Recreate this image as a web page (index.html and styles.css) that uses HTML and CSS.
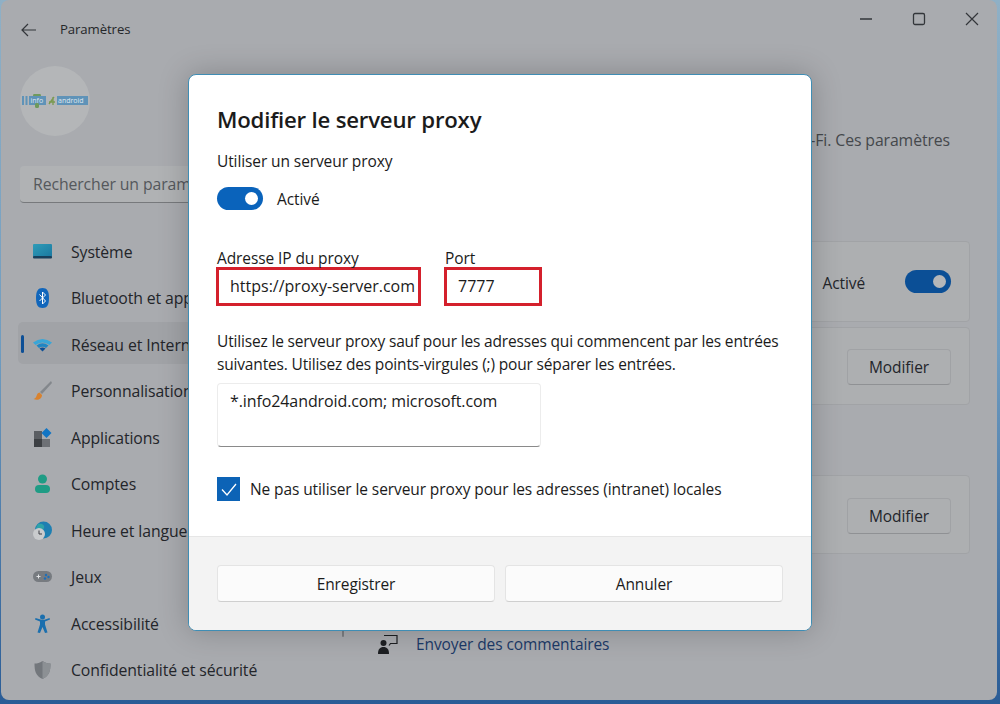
FILE: index.html
```html
<!DOCTYPE html>
<html lang="fr">
<head>
    <meta charset="UTF-8">
    <meta name="viewport" content="width=device-width, initial-scale=1.0">
    <title>Paramètres</title>
    <link rel="stylesheet" href="styles.css">
</head>
<body>
    <div class="window">
        <header class="titlebar">
            <div class="titlebar-left">
                <svg class="back" width="16" height="14" viewBox="0 0 16 14"><path d="M7 1 1 7l6 6M1 7h14" fill="none" stroke="#33363a" stroke-width="1.2"/></svg>
                <span class="app-name">Paramètres</span>
            </div>
            <div class="controls">
                <svg width="14" height="14" viewBox="0 0 14 14"><path d="M1 7h12" stroke="#33363a" stroke-width="1.3"/></svg>
                <svg width="14" height="14" viewBox="0 0 14 14"><rect x="1.5" y="1.5" width="11" height="11" rx="1.5" fill="none" stroke="#33363a" stroke-width="1.3"/></svg>
                <svg width="14" height="14" viewBox="0 0 14 14"><path d="M1 1l12 12M13 1 1 13" stroke="#33363a" stroke-width="1.2"/></svg>
            </div>
        </header>

        <div class="columns">
            <aside class="sidebar">
                <div class="avatar">
                    <svg width="66" height="14" viewBox="0 0 66 14">
                        <rect x="0" y="2" width="2" height="9" fill="#5f93b8"/>
                        <rect x="3.5" y="2" width="2" height="9" fill="#5f93b8"/>
                        <rect x="7" y="2" width="17" height="9" fill="#5f93b8"/>
                        <path d="M11 2a4 3 0 0 1 8 0z" fill="#6f9a5c"/>
                        <rect x="13" y="9" width="4" height="5" rx="1.5" fill="#6f9a5c"/>
                        <text x="8.5" y="9.4" class="logo-text">info</text>
                        <path d="M27 10l5-7M27 8h6M31 3v8" stroke="#7a9a50" stroke-width="1.3" fill="none"/>
                        <rect x="35" y="2" width="31" height="9" fill="#5f93b8"/>
                        <text x="36" y="9.2" class="logo-text">android</text>
                    </svg>
                </div>
                <div class="search">Rechercher un paramètre</div>
                <nav class="nav">
                    <a class="nav-item">
                        <svg class="nav-icon" width="20" height="20" viewBox="0 0 20 20">
                            <defs><linearGradient id="screen" x1="0" y1="0" x2="1" y2="1"><stop offset="0" stop-color="#2f9cb8"/><stop offset="1" stop-color="#1a78a0"/></linearGradient></defs>
                            <rect x="0" y="2" width="19" height="13" rx="1" fill="url(#screen)"/>
                            <rect x="0" y="14" width="19" height="2.5" rx="1" fill="#173f5c"/>
                        </svg>
                        Système
                    </a>
                    <a class="nav-item">
                        <svg class="nav-icon" width="20" height="20" viewBox="0 0 20 20">
                            <path d="M9.500 0C14 0 16 3 16 10s-2 10-6.500 10S3 17 3 10 5 0 9.500 0z" fill="#1166bb"/>
                            <path d="M6.500 6.500l6 6.500-3 3V4l3 3-6 6" fill="none" stroke="#fff" stroke-width="1"/>
                        </svg>
                        Bluetooth et appareils
                    </a>
                    <a class="nav-item active">
                        <svg class="nav-icon" width="20" height="20" viewBox="0 0 20 20">
                            <path d="M0 7.500Q9.500 .5 19 7.500l-2.500 2.500Q9.500 5 2.500 10z" fill="#39a6d8"/>
                            <path d="M3.500 10.500Q9.500 6 15.500 10.500l-2.500 2.500q-3.500-2.500-7 0z" fill="#1f86c4"/>
                            <path d="M6.500 13.500q3-2 6 0l-3 3z" fill="#0d4f96"/>
                        </svg>
                        Réseau et Internet
                    </a>
                    <a class="nav-item">
                        <svg class="nav-icon" width="20" height="20" viewBox="0 0 20 20">
                            <path d="M18 0 7 11l2 2L19 2z" fill="#83878c"/>
                            <path d="M6.500 11.500C3 12 4.500 17 .5 18c4 2 8.500 0 8.500-4z" fill="#d9822e"/>
                        </svg>
                        Personnalisation
                    </a>
                    <a class="nav-item">
                        <svg class="nav-icon" width="20" height="20" viewBox="0 0 20 20">
                            <rect x="1" y="3" width="8" height="8" fill="#5b5e63"/>
                            <rect x="1" y="11" width="8" height="8" fill="#3d4044"/>
                            <rect x="9" y="11" width="8" height="8" fill="#6d7075"/>
                            <path d="M13.500 0l5 5-5 5-5-5z" fill="#1275c4"/>
                        </svg>
                        Applications
                    </a>
                    <a class="nav-item">
                        <svg class="nav-icon" width="20" height="20" viewBox="0 0 20 20">
                            <circle cx="9.500" cy="5" r="4.500" fill="#1f9c85"/>
                            <rect x="2" y="11" width="15" height="8" rx="4" fill="#1f9c85"/>
                        </svg>
                        Comptes
                    </a>
                    <a class="nav-item">
                        <svg class="nav-icon" width="20" height="20" viewBox="0 0 20 20">
                            <circle cx="10.500" cy="9" r="8.500" fill="#1d7fb2"/>
                            <path d="M5 3c4-1 7 1 6 4S5 8 3 7z" fill="#2ea3a8"/>
                            <circle cx="6" cy="13" r="6" fill="#c9cbcd"/>
                            <path d="M6 9.500V13h3" fill="none" stroke="#3c3f44" stroke-width="1"/>
                        </svg>
                        Heure et langue
                    </a>
                    <a class="nav-item">
                        <svg class="nav-icon" width="20" height="20" viewBox="0 0 20 20">
                            <rect x="0" y="4" width="19" height="11" rx="5.500" fill="#777b80"/>
                            <path d="M3.500 9.500h4M5.500 7.500v4" stroke="#e2e4e6" stroke-width="1"/>
                            <circle cx="13" cy="8" r="1.200" fill="#1f6fb8"/>
                            <circle cx="15.500" cy="10" r="1.200" fill="#1f6fb8"/>
                            <circle cx="12" cy="11.500" r="1.200" fill="#1f6fb8"/>
                        </svg>
                        Jeux
                    </a>
                    <a class="nav-item">
                        <svg class="nav-icon" width="20" height="20" viewBox="0 0 20 20">
                            <circle cx="9.500" cy="3" r="2.500" fill="#1b6fae"/>
                            <path d="M2 5.500l5 2v3L4.500 18.500l2.500.5 2.500-6 2.500 6 2.500-.5L12 10.500v-3l5-2-.5-1.500-5 1.800H8.500L2.500 4z" fill="#1b6fae"/>
                        </svg>
                        Accessibilité
                    </a>
                    <a class="nav-item">
                        <svg class="nav-icon" width="20" height="20" viewBox="0 0 20 20">
                            <path d="M9.500 1c3 2 5 2.500 8 2.500 0 7-1 12.500-8 15.500-7-3-8-8.500-8-15.500 3 0 5-.5 8-2.500z" fill="#73777c"/>
                            <path d="M9.500 1c3 2 5 2.500 8 2.500 0 7-1 12.500-8 15.500z" fill="#8c9094"/>
                        </svg>
                        Confidentialité et sécurité
                    </a>
                </nav>
            </aside>

            <main class="content">
                <p class="intro">Utilisez un serveur proxy pour les connexions Ethernet ou Wi-Fi. Ces paramètres</p>
                <div class="card card-first">
                    <span class="card-state">Activé</span>
                    <span class="switch switch-dim"></span>
                </div>
                <div class="card card-second">
                    <span class="card-btn">Modifier</span>
                </div>
                <div class="card card-third">
                    <span class="card-btn">Modifier</span>
                </div>
                <div class="feedback">
                    <svg width="20" height="20" viewBox="0 0 20 20">
                        <circle cx="5.500" cy="9" r="3" fill="#1d1f22"/>
                        <path d="M0 20c0-5 2-7 5.500-7s5.500 2 5.500 7z" fill="#1d1f22"/>
                        <path d="M6 1.500h13v8h-6.500l-1.500 2" fill="none" stroke="#1d1f22" stroke-width="1.200"/>
                    </svg>
                    <span>Envoyer des commentaires</span>
                </div>
            </main>
        </div>

        <span class="scrollbar"></span>

        <section class="dialog">
            <div class="dialog-body">
                <h2 class="dialog-title">Modifier le serveur proxy</h2>
                <p class="line">Utiliser un serveur proxy</p>
                <div class="toggle-row">
                    <span class="switch"></span>
                    <span>Activé</span>
                </div>
                <div class="fields">
                    <div class="field">
                        <label>Adresse IP du proxy</label>
                        <div class="input input-address">https://proxy-server.com</div>
                    </div>
                    <div class="field">
                        <label>Port</label>
                        <div class="input input-port">7777</div>
                    </div>
                </div>
                <p class="help">Utilisez le serveur proxy sauf pour les adresses qui commencent par les entrées suivantes. Utilisez des points-virgules (;) pour séparer les entrées.</p>
                <div class="textarea">*.info24android.com; microsoft.com</div>
                <div class="check-row">
                    <span class="checkbox">
                        <svg width="24" height="24" viewBox="0 0 24 24"><path d="M5 12.500l5 5.500 9-11" fill="none" stroke="#fff" stroke-width="1.300"/></svg>
                    </span>
                    <span>Ne pas utiliser le serveur proxy pour les adresses (intranet) locales</span>
                </div>
            </div>
            <div class="dialog-footer">
                <button class="btn">Enregistrer</button>
                <button class="btn">Annuler</button>
            </div>
        </section>
    </div>
</body>
</html>
```

FILE: styles.css
```css
* {
    box-sizing: border-box;
}
html, body {
    height: 100%;
}
body {
    margin: 0;
    overflow: hidden;
    background: linear-gradient(#8fb0c6, #6f9cc0 50%, #2a5c96);
    font-family: "Open Sans", "Noto Sans", sans-serif;
    font-size: 15.5px;
    letter-spacing: -0.1px;
    color: #1b1b1b;
}
.window {
    position: relative;
    width: 996px;
    height: 700px;
    margin-left: 1px;
    border-radius: 8px;
    background: #a9abaf;
    overflow: hidden;
}
.titlebar {
    display: flex;
    justify-content: space-between;
    height: 58px;
    padding: 21px 18px 0 20px;
}
.titlebar-left {
    display: flex;
    align-items: flex-start;
    gap: 23px;
}
.back {
    margin-top: 2px;
}
.app-name {
    font-size: 13.2px;
    line-height: 16px;
    color: #25272a;
}
.controls {
    display: flex;
    gap: 39px;
    margin-top: -9px;
}
.columns {
    display: flex;
    height: 642px;
}

/* sidebar */
.sidebar {
    width: 339px;
    flex-shrink: 0;
    padding-left: 17px;
}
.avatar {
    display: flex;
    align-items: center;
    justify-content: center;
    width: 70px;
    height: 70px;
    margin: 8px 0 0 2px;
    border-radius: 50%;
    background: #b4b6b8;
}
.logo-text {
    font-size: 7px;
    letter-spacing: 0;
    fill: #dfe7ee;
}
.search {
    width: 300px;
    height: 37px;
    margin: 30px 0 0 2px;
    padding-left: 13px;
    border-radius: 4px;
    border-bottom: 1px solid #77797c;
    background: #b0b2b4;
    color: #55585c;
    font-size: 15.8px;
    line-height: 36px;
    white-space: nowrap;
    overflow: hidden;
}
.nav {
    display: flex;
    flex-direction: column;
    gap: 4.5px;
    margin-top: 26px;
}
.nav-item {
    position: relative;
    display: flex;
    align-items: center;
    gap: 18px;
    height: 42px;
    padding: 3px 0 0 15px;
    border-radius: 5px;
    color: #23252a;
    font-size: 15.8px;
    white-space: nowrap;
}
.nav-item.active {
    background: #a1a3a7;
}
.nav-item.active::before {
    content: "";
    position: absolute;
    left: 3px;
    top: 13px;
    width: 3px;
    height: 18px;
    border-radius: 2px;
    background: #0d4f96;
}
.nav-icon {
    flex-shrink: 0;
}
.scrollbar {
    position: absolute;
    left: 341px;
    top: 560px;
    width: 2px;
    height: 77px;
    border-radius: 1px;
    background: #7d7f83;
}

/* page behind the dialog */
.content {
    flex: 1;
    min-width: 0;
    padding-right: 27px;
}
.intro {
    margin: 69px 20px 0 0;
    color: #45484c;
    font-size: 15.8px;
    line-height: 26px;
    text-align: right;
    white-space: nowrap;
}
.card {
    display: flex;
    align-items: center;
    justify-content: flex-end;
    padding-right: 18px;
    border: 1px solid #a1a3a6;
    border-radius: 4px;
    background: #adafb1;
}
.card-first {
    height: 81px;
    margin-top: 88px;
}
.card-second {
    height: 78px;
    margin-top: 5px;
}
.card-third {
    height: 79px;
    margin-top: 70px;
}
.card-state {
    margin-right: 40px;
    padding-top: 2px;
    color: #23252a;
}
.card-btn {
    width: 104px;
    height: 36px;
    margin-top: 2px;
    border: 1px solid #a0a2a5;
    border-bottom-color: #8f9194;
    border-radius: 4px;
    background: #adafb1;
    color: #23252a;
    line-height: 35px;
    text-align: center;
}
.feedback {
    display: flex;
    align-items: center;
    gap: 18px;
    margin: 79px 0 0 38px;
    color: #1c3a68;
}

/* dialog */
.dialog {
    position: absolute;
    left: 187px;
    top: 74px;
    display: flex;
    flex-direction: column;
    width: 624px;
    height: 557px;
    border: 1px solid #3f8db4;
    border-radius: 8px;
    background: #fff;
    box-shadow: 0 0 30px rgba(0, 0, 0, 0.22);
    overflow: hidden;
}
.dialog-body {
    flex: 1;
    padding: 29px 28px 0;
}
.dialog-title {
    margin: 0;
    font-size: 22.2px;
    font-weight: 600;
    line-height: 32px;
    letter-spacing: -0.2px;
}
.line {
    margin: 14px 0 0;
    line-height: 22px;
}
.toggle-row {
    display: flex;
    align-items: center;
    gap: 14px;
    height: 23px;
    margin-top: 15px;
}
.switch {
    position: relative;
    display: block;
    width: 46px;
    height: 23px;
    border-radius: 12px;
    background: #0a63bb;
}
.switch::after {
    content: "";
    position: absolute;
    right: 5px;
    top: 5px;
    width: 13px;
    height: 13px;
    border-radius: 50%;
    background: #fff;
}
.switch-dim {
    background: #0b4f96;
}
.switch-dim::after {
    background: #b5b7b9;
}
.fields {
    display: flex;
    gap: 24px;
    margin-top: 40px;
}
.field label {
    display: block;
    line-height: 17px;
}
.input {
    height: 39px;
    margin-left: -1px;
    padding-left: 11px;
    border: 3px solid #d4202c;
    font-size: 16px;
    letter-spacing: 0;
    line-height: 33px;
    white-space: nowrap;
}
.input-address {
    width: 205px;
}
.input-port {
    width: 98px;
}
.help {
    margin: 24px 0 0;
    letter-spacing: -0.17px;
    line-height: 23px;
}
.textarea {
    width: 324px;
    height: 64px;
    margin-top: 7px;
    padding: 6px 12px;
    border: 1px solid #ececec;
    border-bottom: 1px solid #8a8a8a;
    border-radius: 4px;
    font-size: 16px;
    line-height: 22px;
}
.check-row {
    display: flex;
    align-items: center;
    gap: 10px;
    margin-top: 30px;
}
.checkbox {
    display: block;
    width: 23px;
    height: 24px;
    background: #0c63b6;
}
.checkbox svg {
    display: block;
}
.dialog-footer {
    display: grid;
    grid-template-columns: 1fr 1fr;
    gap: 10px;
    height: 94px;
    padding: 28px;
    border-top: 1px solid #e6e6e6;
    background: #f3f3f3;
}
.btn {
    height: 37px;
    border: 1px solid #e4e4e4;
    border-bottom-color: #cfcfcf;
    border-radius: 4px;
    background: #fbfbfb;
    color: #1b1b1b;
    font: inherit;
    letter-spacing: inherit;
}
```
